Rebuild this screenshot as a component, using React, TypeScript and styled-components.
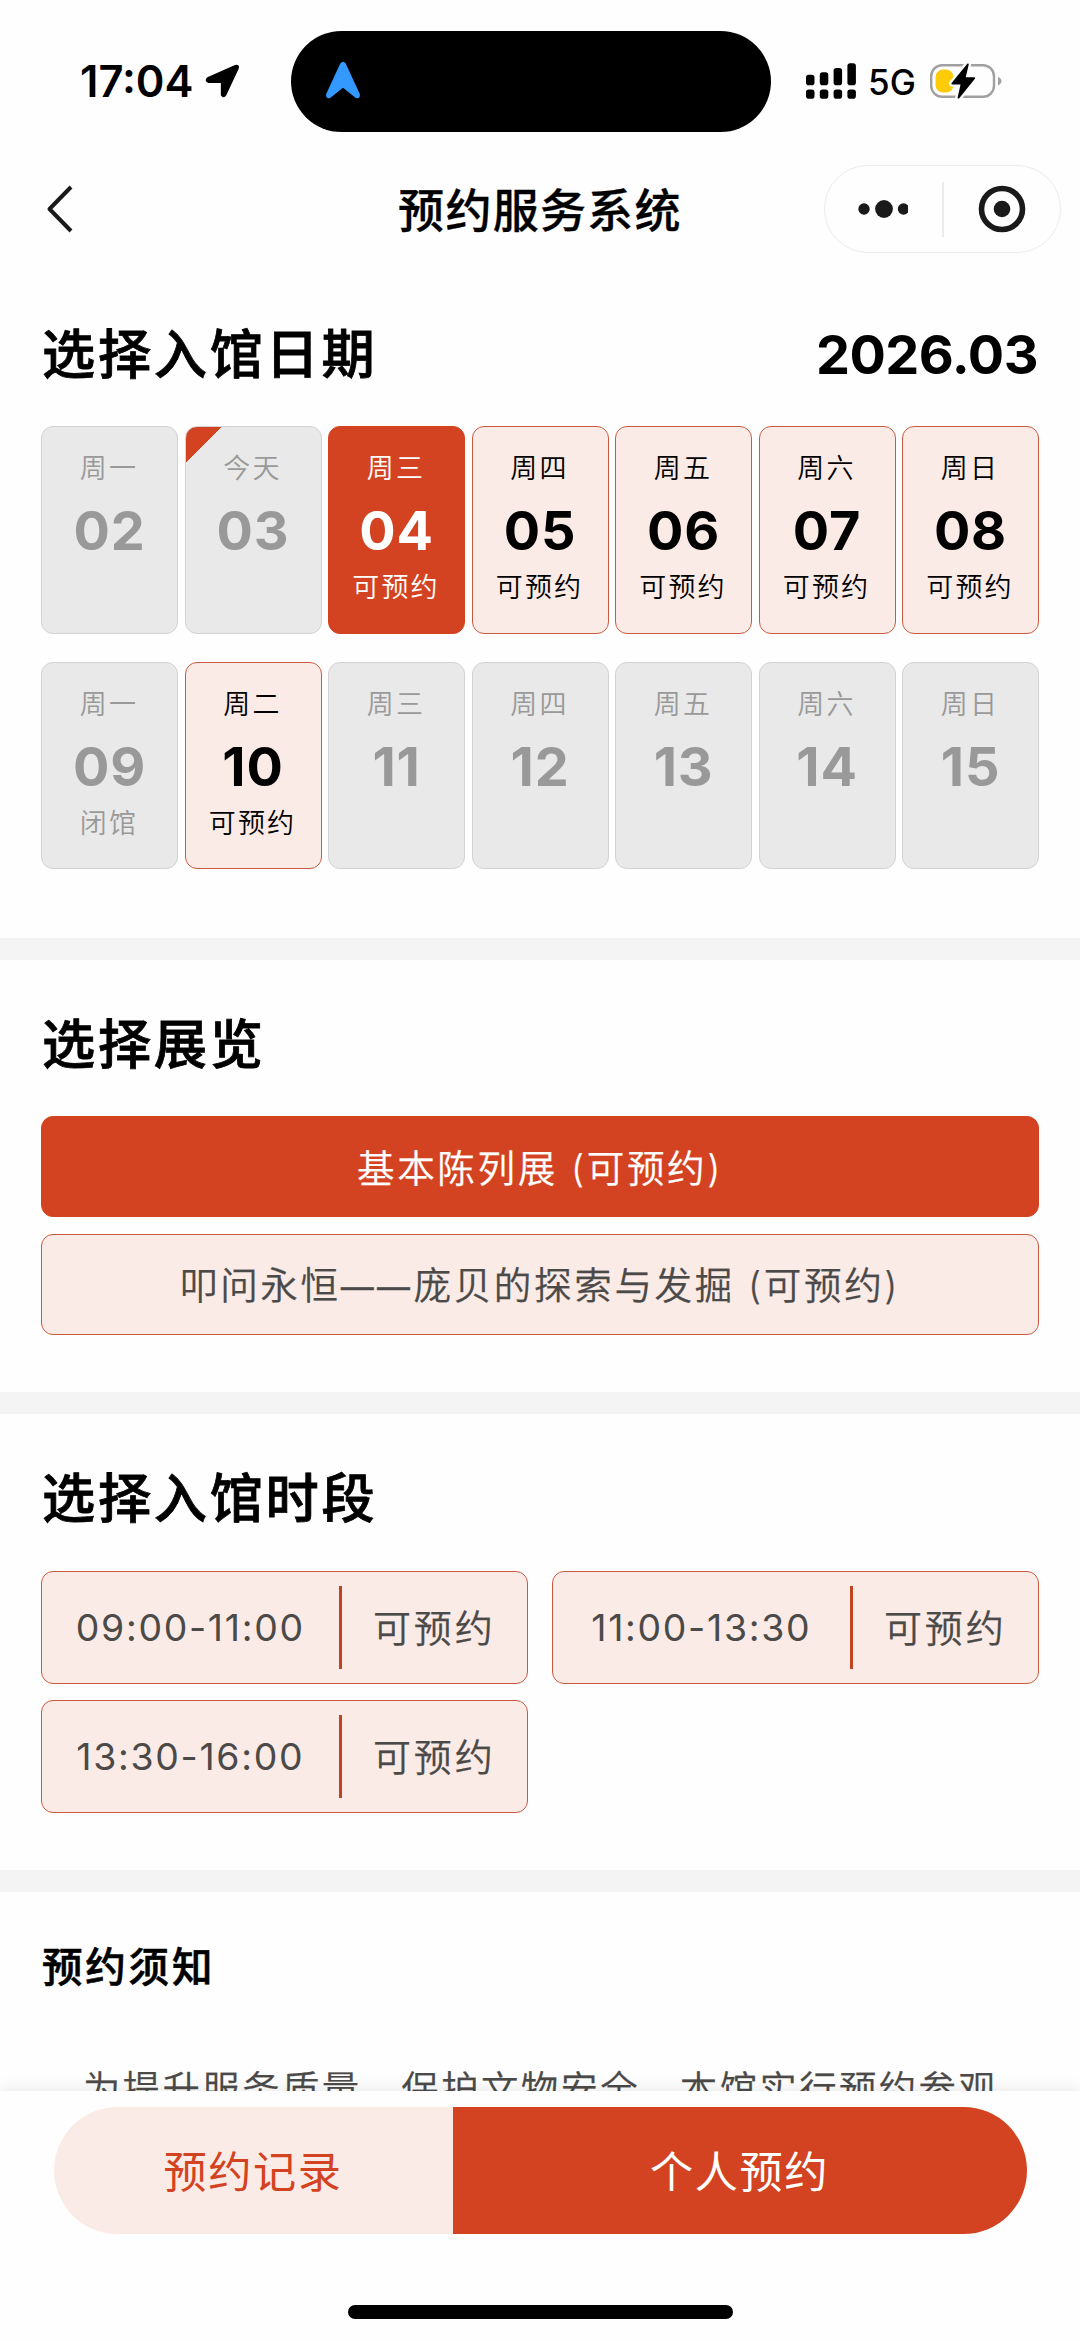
import React from "react";
import styled, { createGlobalStyle, css } from "styled-components";

const ACCENT = "#d44321";
const BLUSH = "#fbebe7";
const BORDER = "#cb5b40";

const GlobalStyle = createGlobalStyle`
  *, *::before, *::after { box-sizing: border-box; }
  body {
    margin: 0;
    background: #fefefe;
    font-family: Inter, "Noto Sans CJK SC", sans-serif;
    color: #000;
  }
  button { font: inherit; border: 0; margin: 0; padding: 0; cursor: pointer; }
  h1, h2, p { margin: 0; }
`;

const Page = styled.div`
  display: flex;
  flex-direction: column;
  width: 1080px;
  height: 2341px;
  overflow: hidden;
  background: #fefefe;
`;

const StatusBar = styled.header`
  display: flex;
  align-items: center;
  flex: none;
  height: 101px;
  margin-top: 31px;
  padding-left: 80px;
`;

const Clock = styled.div`
  display: flex;
  align-items: center;
  gap: 11px;
  width: 211px;
  font-size: 43.5px;
  font-weight: 600;
  line-height: 60px;
  padding-bottom: 2px;
`;

const Island = styled.div`
  display: flex;
  align-items: center;
  width: 480px;
  height: 101px;
  padding: 0 0 4px 34px;
  border-radius: 51px;
  background: #000;
`;

const Indicators = styled.div`
  display: flex;
  align-items: center;
  margin-left: 34px;
  padding-bottom: 2px;
`;

const Network = styled.span`
  margin: 2px 0 0 11px;
  width: 61.5px;
  font-size: 35px;
  font-weight: 500;
  line-height: 48px;
`;

const NavBar = styled.nav`
  display: grid;
  grid-template-columns: 300px 1fr 300px;
  align-items: center;
  flex: none;
  height: 88px;
  margin-top: 33px;
`;

const BackButton = styled.button`
  display: flex;
  justify-self: start;
  margin-left: 46px;
  background: none;
`;

const NavTitle = styled.h1`
  padding-top: 1px;
  text-align: center;
  font-size: 46px;
  font-weight: 500;
  line-height: 64px;
  letter-spacing: 1.3px;
  -webkit-text-stroke: 0.3px #000;
`;

const Capsule = styled.div`
  display: flex;
  align-items: center;
  justify-self: end;
  width: 237px;
  height: 88px;
  margin-right: 19px;
  border: 1.5px solid #ececec;
  border-radius: 44px;
`;

const CapsuleButton = styled.button`
  display: flex;
  flex: 1;
  justify-content: center;
  background: none;
`;

const CapsuleRule = styled.i`
  width: 2px;
  height: 55px;
  background: #ebebeb;
`;

const Content = styled.main`
  display: flex;
  flex-direction: column;
  flex: 1;
  min-height: 0;
  overflow: hidden;
`;

const Section = styled.section<{ $height?: number; $top: number }>`
  flex: none;
  height: ${(p) => (p.$height ? `${p.$height}px` : "auto")};
  padding: ${(p) => p.$top}px 41px 0;
`;

const Band = styled.div`
  flex: none;
  height: 22px;
  background: #f4f4f4;
`;

const SectionHead = styled.div`
  display: flex;
  justify-content: space-between;
  align-items: center;
  height: 72px;
`;

const Heading = styled.h2`
  padding-left: 1px;
  font-size: 53.2px;
  font-weight: 500;
  line-height: 72px;
  letter-spacing: 2.7px;
  -webkit-text-stroke: 0.8px #000;
`;

const Month = styled.div`
  margin-right: 1px;
  font-size: 54px;
  font-weight: 700;
  line-height: 72px;
  letter-spacing: -0.5px;
`;

const DateGrid = styled.div`
  display: grid;
  grid-template-columns: repeat(7, 1fr);
  grid-auto-rows: 207.5px;
  gap: 28px 6.5px;
  margin-top: 35px;
`;

type DayState = "off" | "open" | "selected";

const dayLook = {
  off: css`
    background: #e9e9e9;
    border-color: #d2d2d2;
    color: #999;
  `,
  open: css`
    background: ${BLUSH};
    border-color: ${BORDER};
    color: #000;
  `,
  selected: css`
    background: ${ACCENT};
    border-color: ${ACCENT};
    color: #fff;
  `,
};

const DayCard = styled.button<{ $state: DayState; $today?: boolean }>`
  display: flex;
  flex-direction: column;
  align-items: center;
  overflow: hidden;
  padding-top: 23px;
  border: 1.5px solid;
  border-radius: 12px;
  ${(p) => dayLook[p.$state]}
  ${(p) =>
    p.$today &&
    css`
      background: linear-gradient(135deg, ${ACCENT} 24.8px, #e9e9e9 25.3px);
    `}
`;

const DayLabel = styled.span`
  padding-right: 1px;
  font-size: 27px;
  font-weight: 350;
  line-height: 38px;
  letter-spacing: 2.2px;
`;

const DayNumber = styled.span`
  margin: 10px 0 5px;
  font-size: 54px;
  font-weight: 700;
  line-height: 66px;
  letter-spacing: 0.8px;
`;

const ExhibitList = styled.div`
  display: flex;
  flex-direction: column;
  gap: 16.5px;
  margin-top: 35px;
`;

const ExhibitButton = styled.button<{ $selected?: boolean }>`
  height: 101px;
  padding-bottom: 3px;
  border: 1.5px solid ${(p) => (p.$selected ? ACCENT : BORDER)};
  border-radius: 12px;
  background: ${(p) => (p.$selected ? ACCENT : BLUSH)};
  color: ${(p) => (p.$selected ? "#fff" : "#4b4a48")};
  font-size: 37.6px;
  font-weight: 350;
  letter-spacing: 2.6px;
  -webkit-text-stroke: 0.25px currentColor;
`;

const Dash = styled.span`
  font-size: 33px;
  font-weight: 400;
  letter-spacing: 3.4px;
`;

const SlotGrid = styled.div`
  display: grid;
  grid-template-columns: 1fr 1fr;
  grid-auto-rows: 113px;
  gap: 16.5px 24px;
  margin-top: 35.5px;
`;

const SlotButton = styled.button`
  display: grid;
  grid-template-columns: 296.5px 3px 1fr;
  align-items: center;
  border: 1.5px solid ${BORDER};
  border-radius: 12px;
  background: ${BLUSH};
  color: #4b4a48;
`;

const SlotTime = styled.span`
  font-size: 37.4px;
  font-weight: 400;
  letter-spacing: 1.7px;
`;

const SlotStatus = styled.span`
  padding-bottom: 4px;
  font-size: 38px;
  font-weight: 350;
  letter-spacing: 2.9px;
  -webkit-text-stroke: 0.25px currentColor;
`;

const SlotRule = styled.i`
  height: 83px;
  background: #bf4424;
`;

const NoticeTitle = styled.h2`
  padding-left: 1px;
  font-size: 40.5px;
  font-weight: 500;
  line-height: 56px;
  letter-spacing: 2.8px;
  -webkit-text-stroke: 0.6px #000;
`;

const NoticeText = styled.p`
  margin-top: 66px;
  padding-left: 42px;
  color: #4b4a48;
  font-size: 37.4px;
  font-weight: 350;
  line-height: 56px;
  letter-spacing: 2.4px;
  white-space: nowrap;
  -webkit-text-stroke: 0.25px currentColor;
`;

const Footer = styled.footer`
  position: relative;
  display: flex;
  flex-direction: column;
  align-items: center;
  flex: none;
  height: 250px;
  padding-top: 16px;
  background: #fefefe;
  box-shadow: 0 -3px 14px rgba(0, 0, 0, 0.08);
`;

const Actions = styled.div`
  display: flex;
  width: 973px;
  height: 127px;
  border-radius: 64px;
  overflow: hidden;
`;

const ActionButton = styled.button<{ $primary?: boolean }>`
  width: ${(p) => (p.$primary ? "574px" : "399px")};
  padding-bottom: 4px;
  background: ${(p) => (p.$primary ? ACCENT : BLUSH)};
  color: ${(p) => (p.$primary ? "#fff" : ACCENT)};
  font-size: 43.2px;
  letter-spacing: 1.6px;
`;

const HomeIndicator = styled.div`
  width: 385px;
  height: 14px;
  margin-top: 71px;
  border-radius: 7px;
  background: #000;
`;

const LocationIcon = () => (
  <svg width="35" height="34" viewBox="0 0 35 34">
    <path d="M3.200 13.700 30.300 1.700Q34.200.700 33 4.500L20.600 31Q18.500 34 16.600 31.200V18.300H3.500Q-.500 16.500 3.200 13.700Z" fill="#000" stroke="#000" strokeWidth="1.500" strokeLinejoin="round" />
  </svg>
);

const NavigationIcon = () => (
  <svg width="36" height="38" viewBox="0 0 36 38">
    <path d="M15.400 2.300Q18 -1 20.600 2.300L34.800 33Q35.500 38 31.200 37.200L18 26.800 4.800 37.200Q.5 38 1.200 33Z" fill="#3399ff" />
  </svg>
);

const signalTops = [73.7, 71.3, 67, 62.3];

const SignalIcon = () => (
  <svg width="52" height="36" viewBox="0 62 52 36">
    {signalTops.map((top, i) => (
      <g key={top}>
        <rect x={1 + i * 13.8} y={top} width="8.500" height={84.2 - top} rx="2.800" />
        <rect x={1 + i * 13.8} y="88.500" width="8.500" height="9.200" rx="2.800" />
      </g>
    ))}
  </svg>
);

const BOLT = "M37.800 1.500 22.300 20.500H31.700L28.500 34.800 44.200 15.200H34.600Z";

const BatteryIcon = () => (
  <svg width="73" height="36" viewBox="0 0 73 36">
    <rect x="1.200" y="2.200" width="62.800" height="31.600" rx="11" fill="none" stroke="#a0a0a0" strokeWidth="2.400" />
    <path d="M68 14Q71.500 15.500 71.500 18T68 22.500Z" fill="#a0a0a0" />
    <rect x="5.500" y="6.500" width="18" height="23" rx="7.500" fill="#fecb08" />
    <path d={BOLT} fill="#fefefe" stroke="#fefefe" strokeWidth="6.500" strokeLinejoin="round" />
    <path d={BOLT} fill="#000" stroke="#000" strokeWidth="1.800" strokeLinejoin="round" />
  </svg>
);

const ChevronIcon = () => (
  <svg width="28" height="48" viewBox="0 0 28 48" fill="none">
    <path d="M25 2 3.500 24 25 46" stroke="#1a1a1a" strokeWidth="4" strokeLinejoin="round" />
  </svg>
);

const MoreIcon = () => (
  <svg width="50" height="20" viewBox="1 0 50 20" fill="#1a1a1a">
    <circle cx="7" cy="10" r="5.700" />
    <circle cx="27" cy="10" r="8.900" />
    <circle cx="46.500" cy="10" r="5.700" />
  </svg>
);

const CloseIcon = () => (
  <svg width="48" height="48" viewBox="0 0 48 48">
    <circle cx="24" cy="24" r="20.500" fill="none" stroke="#1a1a1a" strokeWidth="5.600" />
    <circle cx="24" cy="24" r="8.300" fill="#1a1a1a" />
  </svg>
);

interface Day {
  label: string;
  day: string;
  state: DayState;
  note?: string;
  today?: boolean;
}

const days: Day[] = [
  { label: "周一", day: "02", state: "off" },
  { label: "今天", day: "03", state: "off", today: true },
  { label: "周三", day: "04", state: "selected", note: "可预约" },
  { label: "周四", day: "05", state: "open", note: "可预约" },
  { label: "周五", day: "06", state: "open", note: "可预约" },
  { label: "周六", day: "07", state: "open", note: "可预约" },
  { label: "周日", day: "08", state: "open", note: "可预约" },
  { label: "周一", day: "09", state: "off", note: "闭馆" },
  { label: "周二", day: "10", state: "open", note: "可预约" },
  { label: "周三", day: "11", state: "off" },
  { label: "周四", day: "12", state: "off" },
  { label: "周五", day: "13", state: "off" },
  { label: "周六", day: "14", state: "off" },
  { label: "周日", day: "15", state: "off" },
];

const slots = ["09:00-11:00", "11:00-13:30", "13:30-16:00"];

export default function App() {
  return (
    <Page>
      <GlobalStyle />
      <StatusBar>
        <Clock>
          17:04
          <LocationIcon />
        </Clock>
        <Island>
          <NavigationIcon />
        </Island>
        <Indicators>
          <SignalIcon />
          <Network>5G</Network>
          <BatteryIcon />
        </Indicators>
      </StatusBar>
      <NavBar>
        <BackButton aria-label="返回">
          <ChevronIcon />
        </BackButton>
        <NavTitle>预约服务系统</NavTitle>
        <Capsule>
          <CapsuleButton aria-label="更多">
            <MoreIcon />
          </CapsuleButton>
          <CapsuleRule />
          <CapsuleButton aria-label="关闭">
            <CloseIcon />
          </CapsuleButton>
        </Capsule>
      </NavBar>
      <Content>
        <Section $top={66} $height={685}>
          <SectionHead>
            <Heading>选择入馆日期</Heading>
            <Month>2026.03</Month>
          </SectionHead>
          <DateGrid>
            {days.map((d) => (
              <DayCard key={d.day} $state={d.state} $today={d.today}>
                <DayLabel>{d.label}</DayLabel>
                <DayNumber>{d.day}</DayNumber>
                {d.note && <DayLabel>{d.note}</DayLabel>}
              </DayCard>
            ))}
          </DateGrid>
        </Section>
        <Band />
        <Section $top={49} $height={432}>
          <Heading>选择展览</Heading>
          <ExhibitList>
            <ExhibitButton $selected>基本陈列展 (可预约)</ExhibitButton>
            <ExhibitButton>
              叩问永恒<Dash>——</Dash>庞贝的探索与发掘 (可预约)
            </ExhibitButton>
          </ExhibitList>
        </Section>
        <Band />
        <Section $top={49} $height={456}>
          <Heading>选择入馆时段</Heading>
          <SlotGrid>
            {slots.map((time) => (
              <SlotButton key={time}>
                <SlotTime>{time}</SlotTime>
                <SlotRule />
                <SlotStatus>可预约</SlotStatus>
              </SlotButton>
            ))}
          </SlotGrid>
        </Section>
        <Band />
        <Section $top={48}>
          <NoticeTitle>预约须知</NoticeTitle>
          <NoticeText>为提升服务质量，保护文物安全，本馆实行预约参观</NoticeText>
        </Section>
      </Content>
      <Footer>
        <Actions>
          <ActionButton>预约记录</ActionButton>
          <ActionButton $primary>个人预约</ActionButton>
        </Actions>
        <HomeIndicator />
      </Footer>
    </Page>
  );
}
